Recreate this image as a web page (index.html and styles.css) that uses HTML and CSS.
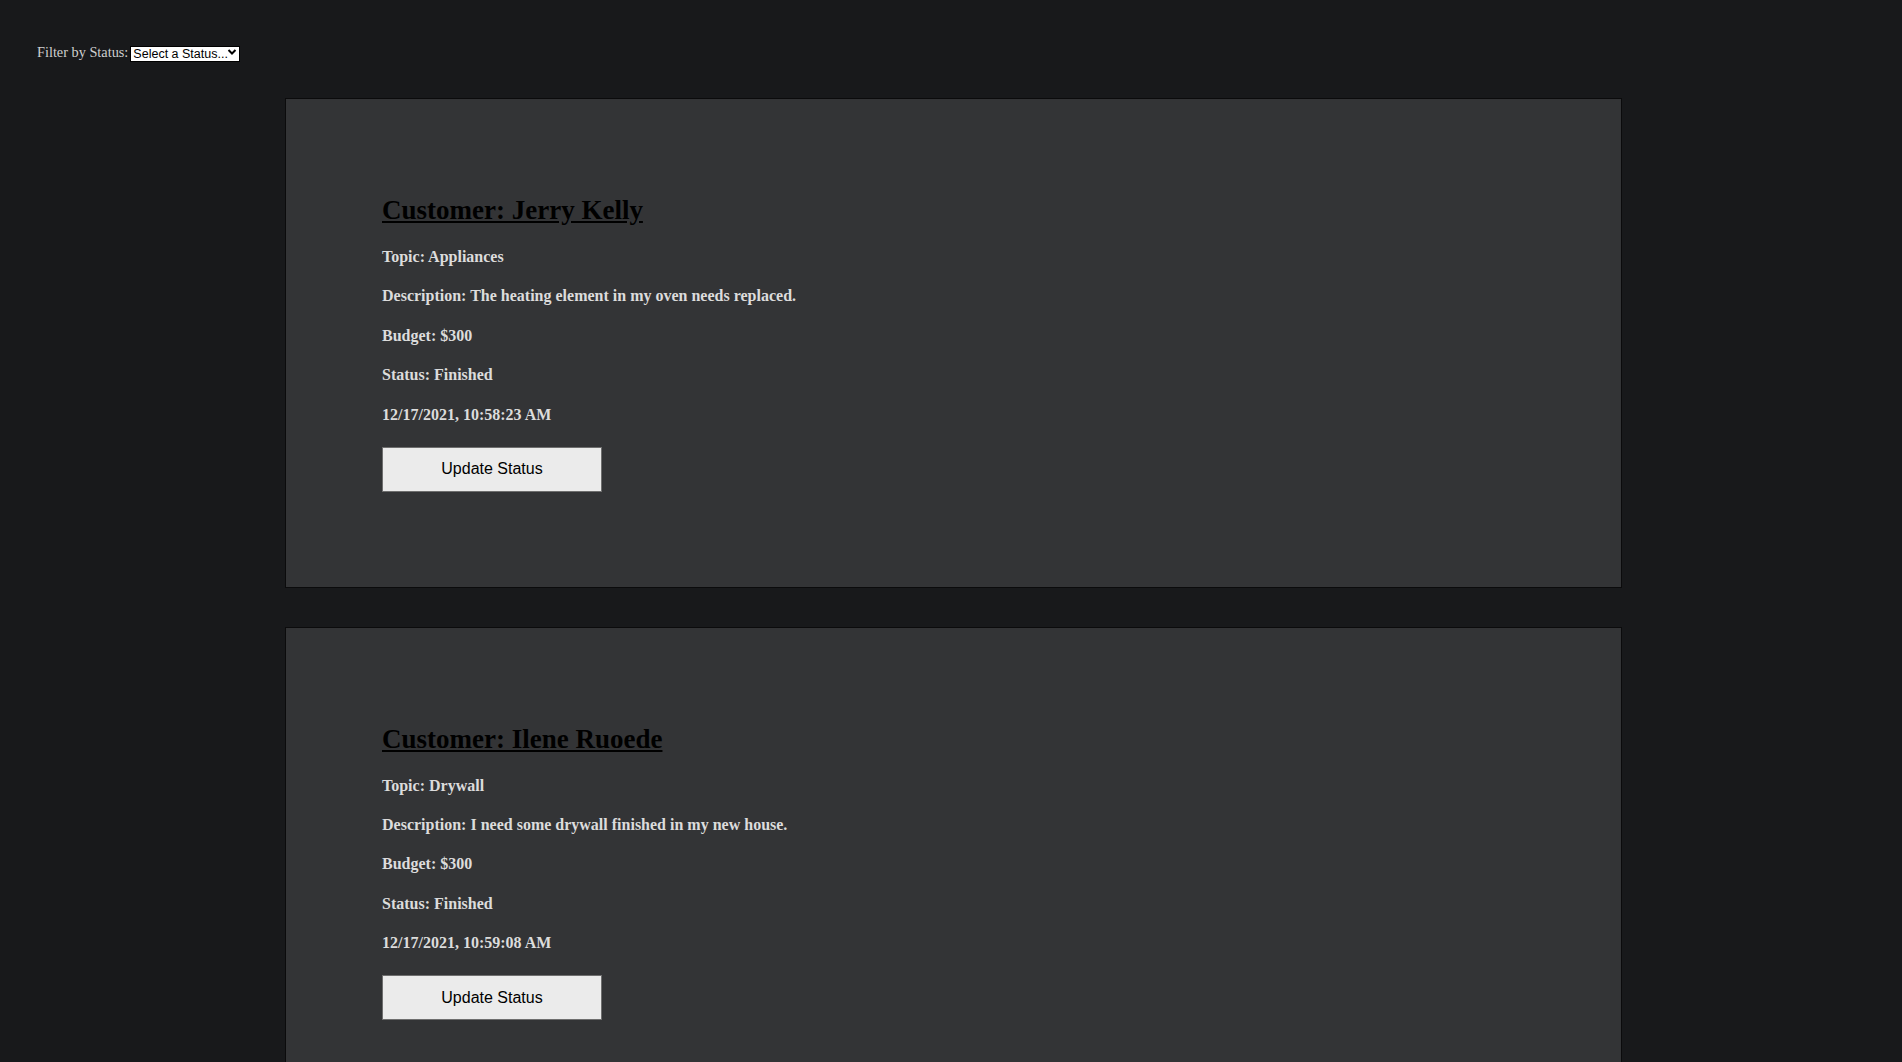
FILE: index.html
```html
<!DOCTYPE html>
<html lang="en">
<head>
<meta charset="utf-8">
<title>Service Requests</title>
<link rel="stylesheet" href="styles.css">
</head>
<body>
  <div class="filter">
    <label class="filter-label" for="status">Filter by Status:</label>
    <span class="select-wrap">
      <select id="status" class="status-select">
        <option>Select a Status...</option>
        <option>Pending</option>
        <option>In Progress</option>
        <option>Finished</option>
      </select>
      <svg class="chevron" viewBox="0 0 10 10" width="10" height="10" aria-hidden="true"><path d="M1.5 3 L5 6.5 L8.5 3" fill="none" stroke="#000" stroke-width="2"/></svg>
    </span>
  </div>

  <main class="orders">
    <section class="card">
      <h2 class="customer"><a href="#">Customer: Jerry Kelly</a></h2>
      <h4 class="detail">Topic: Appliances</h4>
      <h4 class="detail">Description: The heating element in my oven needs replaced.</h4>
      <h4 class="detail">Budget: $300</h4>
      <h4 class="detail">Status: Finished</h4>
      <h4 class="detail">12/17/2021, 10:58:23 AM</h4>
      <button class="update-btn" type="button">Update Status</button>
    </section>

    <section class="card">
      <h2 class="customer"><a href="#">Customer: Ilene Ruoede</a></h2>
      <h4 class="detail">Topic: Drywall</h4>
      <h4 class="detail">Description: I need some drywall finished in my new house.</h4>
      <h4 class="detail">Budget: $300</h4>
      <h4 class="detail">Status: Finished</h4>
      <h4 class="detail">12/17/2021, 10:59:08 AM</h4>
      <button class="update-btn" type="button">Update Status</button>
    </section>
  </main>
</body>
</html>
```
FILE: styles.css
```css
html, body {
  margin: 0;
  padding: 0;
  background: #18191b;
}

body {
  font-family: "Liberation Serif", "Times New Roman", serif;
  color: #dcdcdc;
  overflow: hidden;
}

.filter {
  display: flex;
  align-items: center;
  padding: 44px 0 0 37px;
  height: 16px;
}

.filter-label {
  font-size: 14.3px;
  color: #cfcfcf;
  margin-right: 2px;
}

.select-wrap {
  position: relative;
  display: inline-block;
  height: 16px;
}

.status-select {
  appearance: none;
  -webkit-appearance: none;
  box-sizing: border-box;
  width: 110px;
  height: 16px;
  margin: 0;
  padding: 0 0 0 2px;
  border: 1px solid #000;
  border-radius: 0;
  background: #fff;
  color: #000;
  font-family: "Liberation Sans", Arial, sans-serif;
  font-size: 12.5px;
  line-height: 14px;
}

.chevron {
  position: absolute;
  right: 3px;
  top: 3px;
  pointer-events: none;
}

.orders {
  display: flex;
  flex-direction: column;
  gap: 39px;
  padding: 0 280px 0 285px;
  margin-top: 38px;
}

.card {
  background: #333436;
  border: 1px solid #0b0b0c;
  padding: 96px 96px 95px 96px;
}

.customer {
  margin: 0 0 22px;
  font-size: 27px;
  font-weight: bold;
  line-height: normal;
}

.customer a {
  color: #000;
  text-decoration: underline;
}

.detail {
  margin: 21.4px 0;
  font-size: 16px;
  font-weight: bold;
  color: #dcdcdc;
}

.update-btn {
  display: block;
  box-sizing: border-box;
  width: 220px;
  height: 45px;
  margin: 23px 0 0;
  padding: 0;
  background: #ebebeb;
  border: 1px solid #6e6e6e;
  border-radius: 0;
  color: #000;
  font-family: "Liberation Sans", Arial, sans-serif;
  font-size: 16px;
}
```
